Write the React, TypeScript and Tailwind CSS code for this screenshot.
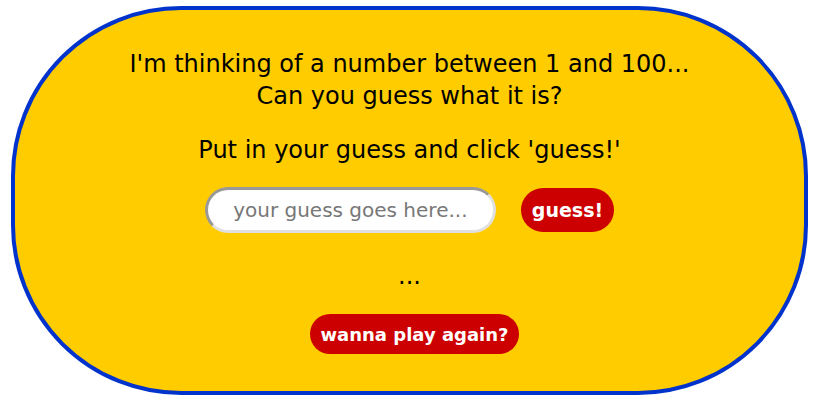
export default function App() {
  return (
    <div className="min-h-[401px] w-[818px] bg-white pt-[6px] pl-[11px]" style={{ fontFamily: '"DejaVu Sans", Verdana, sans-serif' }}>
      <div className="flex h-[389px] w-[797px] flex-col items-center rounded-[170px] border-4 border-[#0033cc] bg-[#ffcc00] pt-[38px] text-black">
        <p className="text-center text-[24px] leading-[32px]">
          I'm thinking of a number between 1 and 100...
          <br />
          Can you guess what it is?
        </p>
        <p className="mt-[22px] text-center text-[24px] leading-[32px]">Put in your guess and click 'guess!'</p>
        <div className="mt-[21px] flex items-center gap-[25px]">
          <input
            type="text"
            placeholder="your guess goes here..."
            className="h-[46px] w-[291px] rounded-full border-[3px] border-t-[#999999] border-l-[#999999] border-r-[#e0e0e0] border-b-[#e0e0e0] bg-white text-center text-[20px] text-black outline-none placeholder:text-[#777777]"
            style={{ borderStyle: 'solid' }}
          />
          <button className="h-[44px] rounded-full bg-[#cc0000] px-[11px] text-[19px] font-bold text-white">guess!</button>
        </div>
        <p className="mt-[27px] text-center text-[24px] leading-[32px]">...</p>
        <button className="mt-[22px] ml-[10px] h-[40px] rounded-full bg-[#cc0000] px-[10px] text-[18px] font-bold text-white">wanna play again?</button>
      </div>
    </div>
  );
}
